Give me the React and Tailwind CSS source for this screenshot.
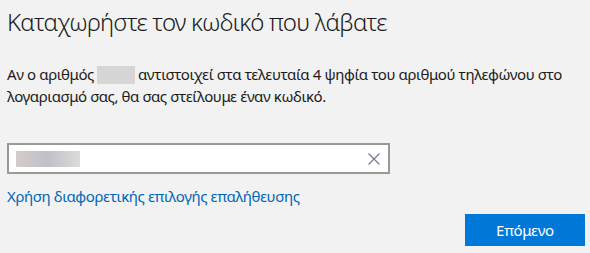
export default function App() {
  return (
    <div className="w-[590px] h-[253px] bg-[#f2f2f2] overflow-hidden font-['Noto_Sans',sans-serif] text-black">
      <div className="pl-[7px] pr-[5px] pt-[6px]">
        <h1 className="text-[24px] leading-[32px] font-light tracking-[-0.8px] text-[#1b1b1b]">
          Καταχωρήστε τον κωδικό που λάβατε
        </h1>
        <p className="mt-[25px] text-[15px] leading-[22px] tracking-[-0.4px] text-[#1b1b1b]">
          Αν ο αριθμός
          <span className="inline-block align-[-4px] w-[38px] h-[18px] bg-[#d6d6d6] mx-[3px]" />
          αντιστοιχεί στα τελευταία 4 ψηφία του αριθμού τηλεφώνου στο λογαριασμό σας, θα σας στείλουμε έναν κωδικό.
        </p>
        <div className="mt-[36px] w-[383px] h-[31px] border-2 border-[#999999] bg-white flex items-center justify-between pl-[7px] pr-[8px]">
          <span className="w-[64px] h-[16px] bg-gradient-to-r from-[#d4ccc8] via-[#c0c0c8] to-[#dcdcdc]" />
          <svg width="12" height="12" viewBox="0 0 12 12" className="text-[#6b7a88]">
            <path d="M0.5 0.5 L11.5 11.5 M11.5 0.5 L0.5 11.5" stroke="currentColor" strokeWidth="1.1" fill="none" />
          </svg>
        </div>
        <a href="#" className="block mt-[11px] text-[15px] leading-[22px] tracking-[-0.4px] text-[#0067b8]">
          Χρήση διαφορετικής επιλογής επαλήθευσης
        </a>
        <div className="flex justify-end mt-[7px]">
          <button className="w-[120px] h-[32px] bg-[#0078d7] text-white text-[15px] leading-[20px] tracking-[-0.3px]">
            Επόμενο
          </button>
        </div>
      </div>
    </div>
  );
}
